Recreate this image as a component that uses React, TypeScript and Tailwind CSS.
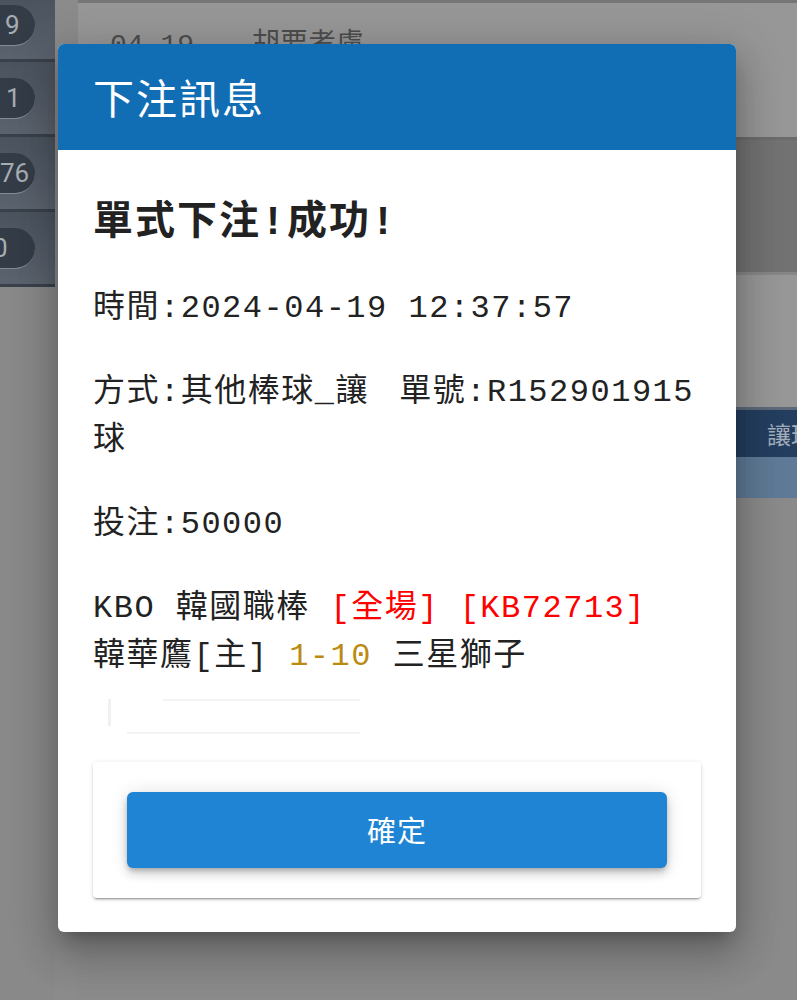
import React from 'react';

const sideRows = [
  { value: '9', row: 'h-[62px] items-start pt-[5px]', text: 'pl-[5px]' },
  { value: '1', row: 'h-[75px] items-center', text: 'pl-[6px]' },
  { value: '76', row: 'h-[75px] items-center', text: 'pl-0' },
  { value: '0', row: 'h-[75px] items-center', text: '-ml-[7px]' },
];

const mono = "font-['Liberation_Mono','Noto_Sans_CJK_TC',monospace]";

const App: React.FC = () => {
  return (
    <div className="relative flex h-[1000px] w-[797px] overflow-hidden bg-[#898989]">
      {/* Left side list */}
      <div className="flex w-[55px] shrink-0 flex-col">
        {sideRows.map((r, i) => (
          <div
            key={i}
            className={`flex ${r.row} border-b-[3px] border-[#3a414b] bg-gradient-to-b from-[#4b535f] to-[#5b636e]`}
          >
            <div className="flex h-[41px] w-[35px] items-center overflow-hidden rounded-r-full border-b border-[#858b93] bg-[#343c47]">
              <span className={`${r.text} font-['Roboto',sans-serif] text-[26px] leading-none text-[#a7acb3]`}>
                {r.value}
              </span>
            </div>
          </div>
        ))}
      </div>

      <div className="w-[23px] shrink-0 bg-[#8b8b8b]" />

      {/* Main page behind the dialog */}
      <div className="flex flex-1 flex-col">
        <div className="h-[3px] bg-[#767676]" />
        <div className="flex h-[134px] gap-[58px] bg-[#979797] pl-[32px] pt-[26px]">
          <span className={`${mono} text-[28px] leading-[34px] text-[#4d4d4d]`}>04-19</span>
          <span className={`${mono} text-[28px] leading-[34px] text-[#4d4d4d]`}>胡要考慮</span>
        </div>
        <div className="h-[3px] bg-[#6c6c6c]" />
        <div className="h-[132px] bg-[#727272]" />
        <div className="h-[3px] bg-[#868686]" />
        <div className="h-[132px] bg-[#979797]" />
        <div className="flex h-[50px] items-center border-t-[3px] border-[#5d6878] bg-[#243e5f] pl-[689px]">
          <span className="whitespace-nowrap font-['Noto_Sans_CJK_TC',sans-serif] text-[24px] text-[#a3adb9]">讓球</span>
        </div>
        <div className="h-[41px] bg-[#5f7a96]" />
        <div className="flex-1 bg-[#8a8a8a]" />
      </div>

      {/* Dialog */}
      <div className="absolute left-[58px] top-[44px] w-[678px] overflow-hidden rounded-[6px] bg-white shadow-[0_11px_15px_-7px_rgba(0,0,0,0.25),0_24px_38px_3px_rgba(0,0,0,0.16),0_9px_46px_8px_rgba(0,0,0,0.14)]">
        <div className="flex h-[106px] items-center bg-[#116eb5] px-[35px]">
          <h2 className="font-['Noto_Sans_CJK_TC',sans-serif] text-[41px] font-normal tracking-[2px] text-white">
            下注訊息
          </h2>
        </div>

        <div className={`${mono} px-[35px] pb-[34px] pt-[50px] text-[#222]`}>
          <p className="text-[40px] font-bold leading-[48px] tracking-[2px]">單式下注!成功!</p>

          <div className="mt-[37px] text-[32px] leading-[48px] tracking-[1.5px]">
            <p>時間:2024-04-19 12:37:57</p>

            <p className="mt-[36px] flow-root">
              <span className="float-right ml-[12px] pr-[7px]">單號:R152901915</span>
              方式:其他棒球_讓球
            </p>

            <p className="mt-[36px]">投注:50000</p>

            <p className="mt-[36px]">
              KBO 韓國職棒 <span className="text-[#ff0000]">[全場]</span>{' '}
              <span className="text-[#ff0000]">[KB72713]</span>
              <br />
              韓華鷹[主] <span className="text-[#bb8a12]">1-10</span> 三星獅子
            </p>
          </div>

          {/* erased line */}
          <div className="mt-[18px] flex h-[35px] pl-[15px]">
            <div className="h-[27px] w-[3px] bg-[#f0f0f0]" />
            <div className="ml-[16px] flex w-[233px] flex-col justify-between">
              <div className="ml-[36px] h-[2px] bg-[#f3f3f3]" />
              <div className="h-[2px] bg-[#f3f3f3]" />
            </div>
          </div>

          <div className="mt-[28px] rounded-[4px] bg-white px-[34px] py-[30px] shadow-[0_3px_1px_-2px_rgba(0,0,0,0.2),0_2px_2px_0_rgba(0,0,0,0.14),0_1px_5px_0_rgba(0,0,0,0.12)]">
            <button className="flex h-[76px] w-full items-center justify-center rounded-[6px] bg-[#1f84d3] font-['Noto_Sans_CJK_TC',sans-serif] text-[29px] font-normal tracking-[1px] text-white shadow-[0_3px_5px_-1px_rgba(0,0,0,0.2),0_6px_10px_0_rgba(0,0,0,0.14),0_1px_18px_0_rgba(0,0,0,0.12)]">
              確定
            </button>
          </div>
        </div>
      </div>
    </div>
  );
};

export default App;
